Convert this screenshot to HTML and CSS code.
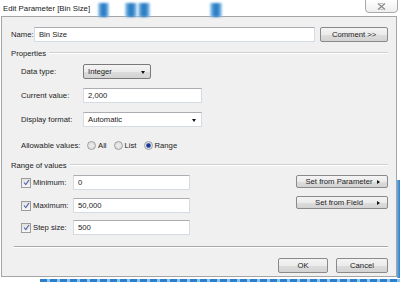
FILE: index.html
```html
<!DOCTYPE html>
<html>
<head>
    <link rel="stylesheet" href="styles.css">
</head>
<body>
    <div class="screen">
        <div class="titlebar">
            <span class="title">Edit Parameter [Bin Size]</span>
            <div class="blur b1"></div>
            <div class="blur b2"></div>
            <div class="blur b3"></div>
            <div class="blur b4"></div>
            <div class="close">
                <svg width="9" height="7" viewBox="0 0 9 7"><path d="M1 0.5 L8 6.5 M8 0.5 L1 6.5" stroke="#8a8a8a" stroke-width="1.2" fill="none"/><path d="M2.5 0.5 L6.5 0.5 M2.5 6.5 L6.5 6.5" stroke="#b5b5b5" stroke-width="0.8"/></svg>
            </div>
        </div>
        <div class="edge-right"></div>

        <div class="dialog">
            <div class="name-row">
                <label class="name-label">Name:</label>
                <div class="field name-field">Bin Size</div>
                <div class="btn comment-btn">Comment &gt;&gt;</div>
            </div>

            <div class="group-head head-props"><span>Properties</span><i></i></div>

            <div class="prop-row row-type">
                <label>Data type:</label>
                <div class="btn select type-select">Integer <b class="arrow"></b></div>
            </div>
            <div class="prop-row row-current">
                <label>Current value:</label>
                <div class="field wide-field">2,000</div>
            </div>
            <div class="prop-row row-format">
                <label>Display format:</label>
                <div class="field wide-field select">Automatic <b class="arrow"></b></div>
            </div>
            <div class="prop-row row-allow">
                <label>Allowable values:</label>
                <div class="radios">
                    <span class="radio"><i></i>All</span>
                    <span class="radio"><i></i>List</span>
                    <span class="radio on"><i></i>Range</span>
                </div>
            </div>

            <div class="group-head head-range"><span>Range of values</span><i></i></div>

            <div class="range">
                <div class="range-fields">
                    <div class="range-row r-min">
                        <span class="check"><svg width="7" height="7" viewBox="0 0 7 7"><path d="M1 3.5 L2.8 5.6 L6 1" stroke="#4a64a8" stroke-width="1.1" fill="none"/></svg></span>
                        <label>Minimum:</label>
                        <div class="field range-field">0</div>
                    </div>
                    <div class="range-row r-max">
                        <span class="check"><svg width="7" height="7" viewBox="0 0 7 7"><path d="M1 3.5 L2.8 5.6 L6 1" stroke="#4a64a8" stroke-width="1.1" fill="none"/></svg></span>
                        <label>Maximum:</label>
                        <div class="field range-field">50,000</div>
                    </div>
                    <div class="range-row r-step">
                        <span class="check"><svg width="7" height="7" viewBox="0 0 7 7"><path d="M1 3.5 L2.8 5.6 L6 1" stroke="#4a64a8" stroke-width="1.1" fill="none"/></svg></span>
                        <label>Step size:</label>
                        <div class="field range-field">500</div>
                    </div>
                </div>
                <div class="range-buttons">
                    <div class="btn set-btn">Set from Parameter <b class="tri"></b></div>
                    <div class="btn set-btn">Set from Field <b class="tri"></b></div>
                </div>
            </div>

            <div class="sep"></div>

            <div class="footer">
                <div class="btn ok-btn">OK</div>
                <div class="btn cancel-btn">Cancel</div>
            </div>
        </div>
        <div class="edge-bottom"></div>
    </div>
</body>
</html>
```

FILE: styles.css
```css
body {
    margin: 0;
    background: #ffffff;
    font-family: "Liberation Sans", Arial, sans-serif;
    font-size: 7.7px;
    color: #1b1b1b;
}
.screen {
    width: 400px;
    height: 282px;
    position: relative;
    overflow: hidden;
}
.titlebar {
    height: 16px;
    display: flex;
    align-items: center;
    padding-left: 3px;
}
.title {
    font-size: 7.8px;
    color: #202020;
    position: relative;
    z-index: 1;
}
.blur {
    position: absolute;
    top: 3px;
    height: 14px;
    background: linear-gradient(to right, #a7d3f2, #2f7fc6 35%, #2a7cc4 65%, #a9d5f3);
    filter: blur(1px);
}
.b1 { left: 98px; width: 11px; }
.b2 { left: 125px; width: 12px; }
.b3 { left: 138px; width: 12px; }
.b4 { left: 210px; width: 12px; }
.close {
    position: absolute;
    top: -1px;
    left: 365px;
    width: 31px;
    height: 12px;
    border: 1px solid #a9a9a9;
    border-radius: 0 0 4px 4px;
    background: linear-gradient(#ffffff, #eeeeee);
    display: flex;
    align-items: center;
    justify-content: center;
}
.edge-right {
    position: absolute;
    left: 397px;
    top: 180px;
    width: 3px;
    height: 98px;
    background: linear-gradient(to right, #6aaee4, #2a80cc);
}
.edge-bottom {
    position: absolute;
    left: 40px;
    top: 279px;
    width: 360px;
    height: 3px;
    background: repeating-linear-gradient(to right, #2b7fcb 0 7px, #8cc3ec 7px 10px);
}
.dialog {
    margin-left: 1px;
    width: 378px;
    height: 259px;
    border: 1px solid #a5a5a5;
    background: #f0f0f0;
    padding: 0 8px;
    display: flex;
    flex-direction: column;
}
label {
    white-space: nowrap;
}
.field {
    height: 13px;
    border: 1px solid #d5dbe3;
    border-top-color: #abadb3;
    background: #ffffff;
    display: flex;
    align-items: center;
    padding-left: 4px;
}
.btn {
    height: 13px;
    border: 1px solid #8a8a8a;
    border-radius: 2px;
    background: linear-gradient(#f4f4f4 0%, #ebebeb 50%, #dddddd 51%, #d3d3d3 100%);
    display: flex;
    align-items: center;
    justify-content: center;
}
.name-row {
    margin-top: 10px;
    display: flex;
    align-items: center;
}
.name-label {
    width: 23px;
    padding-left: 1px;
}
.name-field {
    width: 276px;
}
.comment-btn {
    width: 66px;
    margin-left: 5px;
}
.group-head {
    display: flex;
    align-items: center;
    height: 10px;
    padding-left: 1px;
}
.group-head i {
    flex: 1;
    height: 1px;
    background: #d0d0d0;
    border-bottom: 1px solid #ffffff;
    margin-left: 3px;
}
.head-props { margin-top: 6px; }
.head-range { margin-top: 9px; }
.prop-row {
    display: flex;
    align-items: center;
    padding-left: 11px;
}
.prop-row label {
    width: 62px;
}
.row-type { margin-top: 6px; }
.row-current { margin-top: 9px; }
.row-format { margin-top: 9px; }
.row-allow { margin-top: 12px; height: 12px; }
.select {
    position: relative;
    justify-content: flex-start;
    padding-left: 4px;
}
.type-select {
    width: 62px;
    border-color: #7a7a7a;
}
.wide-field {
    width: 113px;
}
.arrow {
    position: absolute;
    right: 5px;
    top: 6px;
    border-left: 2.5px solid transparent;
    border-right: 2.5px solid transparent;
    border-top: 3px solid #111111;
}
.radios {
    display: flex;
    align-items: center;
    margin-left: 4px;
}
.radio {
    display: flex;
    align-items: center;
    margin-right: 7px;
}
.radio i {
    width: 7px;
    height: 7px;
    border: 1px solid #a0a0a0;
    border-radius: 50%;
    background: radial-gradient(#eeeeee, #d6d6d6);
    margin-right: 2px;
}
.radio.on i {
    background: radial-gradient(#1d3a88 0 1.8px, #6c8fd0 2.2px, #e3e3e3 3px);
}
.range {
    display: flex;
    margin-top: 5px;
}
.range-fields {
    width: 286px;
}
.range-row {
    display: flex;
    align-items: center;
    padding-left: 11px;
    height: 15px;
}
.r-max { margin-top: 8px; }
.r-step { margin-top: 7px; }
.check {
    width: 8px;
    height: 8px;
    border: 1px solid #9c9c9c;
    background: linear-gradient(#e2e2e2, #f7f7f7);
    display: flex;
    align-items: center;
    justify-content: center;
    margin-right: 2px;
}
.range-row label {
    width: 40px;
}
.range-field {
    width: 111px;
}
.range-buttons {
    display: flex;
    flex-direction: column;
    gap: 8px;
}
.set-btn {
    width: 91px;
    position: relative;
    justify-content: center;
    padding-right: 6px;
    box-sizing: border-box;
    width: 92px;
}
.set-btn .tri {
    position: absolute;
    right: 7px;
    top: 4px;
    border-top: 2.5px solid transparent;
    border-bottom: 2.5px solid transparent;
    border-left: 3px solid #111111;
}
.sep {
    margin-top: 11px;
    margin-left: 4px;
    height: 1px;
    background: #a9a9a9;
    border-bottom: 1px solid #ffffff;
}
.footer {
    margin-top: 10px;
    display: flex;
    justify-content: flex-end;
    gap: 8px;
}
.ok-btn { width: 48px; }
.cancel-btn { width: 50px; }
```
